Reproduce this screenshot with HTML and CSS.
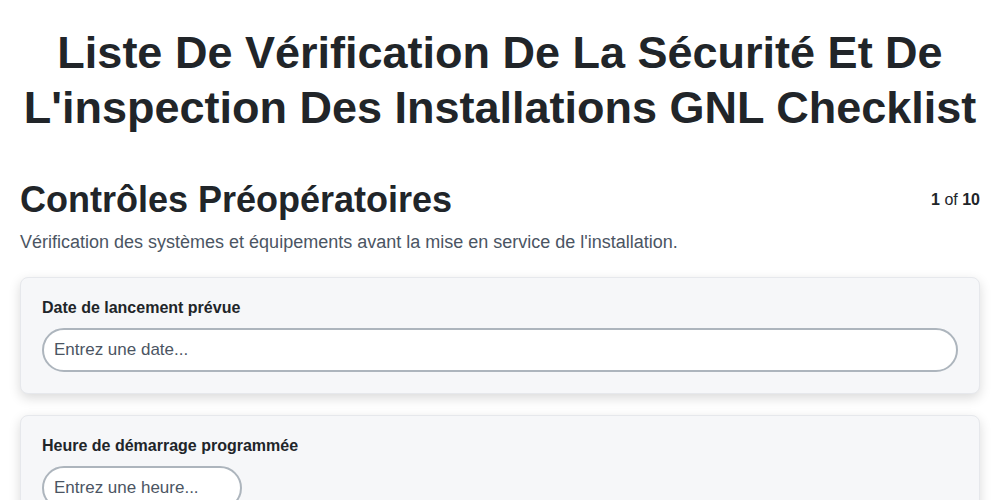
FILE: index.html
```html
<!DOCTYPE html>
<html lang="fr">
<head>
    <meta charset="UTF-8">
    <meta name="viewport" content="width=device-width, initial-scale=1.0">
    <title>Liste De Vérification GNL</title>
    <link rel="stylesheet" href="styles.css">
</head>
<body>
    <div class="page">
        <h1 class="title">Liste De Vérification De La Sécurité Et De L'inspection Des Installations GNL Checklist</h1>

        <div class="section-head">
            <h2 class="section-title">Contrôles Préopératoires</h2>
            <div class="pager"><b>1</b> of <b>10</b></div>
        </div>
        <p class="section-desc">Vérification des systèmes et équipements avant la mise en service de l'installation.</p>

        <!-- questions -->
        <div class="card">
            <label class="label" for="date">Date de lancement prévue</label>
            <input class="field" type="text" id="date" placeholder="Entrez une date...">
        </div>

        <div class="card">
            <label class="label" for="heure">Heure de démarrage programmée</label>
            <input class="field field-small" type="text" id="heure" placeholder="Entrez une heure...">
        </div>
    </div>
</body>
</html>
```

FILE: styles.css
```css
body {
    margin: 0;
    background-color: #fff;
    color: #212529;
    font-family: "Liberation Sans", Arial, sans-serif;
}

.page {
    padding: 0 20px;
}

/* titre principal */
.title {
    margin: 0;
    padding: 25px 0 0 0;
    text-align: center;
    font-size: 45px;
    line-height: 55px;
    font-weight: bold;
}

/* entete de section */
.section-head {
    display: flex;
    justify-content: space-between;
    align-items: center;
    margin-top: 44px;
}

.section-title {
    margin: 0;
    font-size: 36px;
    line-height: 42px;
    font-weight: bold;
}

.pager {
    font-size: 16px;
    color: #212529;
}

.section-desc {
    margin: 11px 0 24px 0;
    font-size: 18px;
    line-height: 21px;
    color: #4b5563;
}

/* cartes */
.card {
    background-color: #f6f7f9;
    border: 1px solid #e6e8ec;
    border-radius: 8px;
    box-shadow: 0 4px 12px rgba(0, 0, 0, 0.15);
    padding: 19px 21px 21px 21px;
    margin-bottom: 21px;
}

.label {
    display: block;
    font-size: 16px;
    line-height: 22px;
    font-weight: bold;
    margin-bottom: 9px;
}

.field {
    display: block;
    box-sizing: border-box;
    width: 100%;
    height: 44px;
    padding: 0 10px;
    border: 2px solid #adb5bd;
    border-radius: 22px;
    background-color: #fff;
    font-family: "Liberation Sans", Arial, sans-serif;
    font-size: 17px;
    color: #212529;
}

.field::placeholder {
    color: #4b5563;
}

.field-small {
    width: 200px;
}
```
